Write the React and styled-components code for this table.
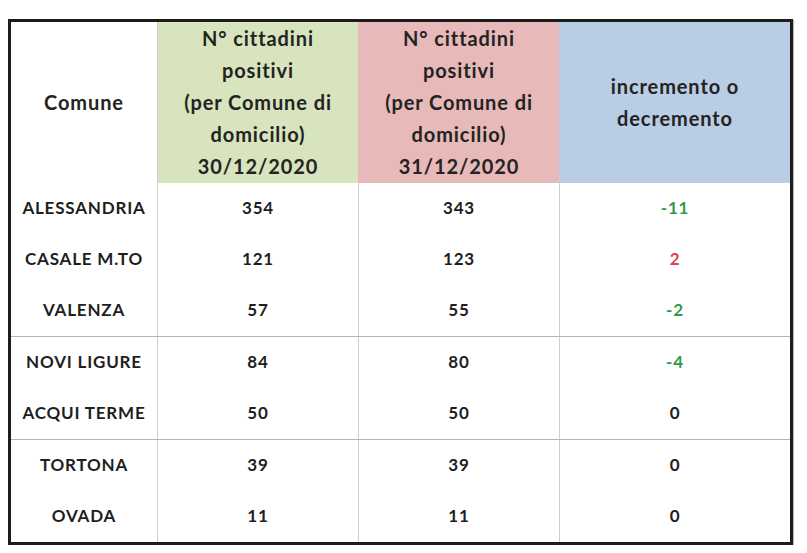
import React from 'react';
import styled, {createGlobalStyle} from 'styled-components';

const GlobalStyle = createGlobalStyle`
  html, body {
    margin: 0;
    padding: 0;
    background: #fff;
  }
  body {
    font-family: Lato, "Open Sans", "Liberation Sans", sans-serif;
    color: #222;
  }
`;

const groups = [
    [
        {name: 'ALESSANDRIA', a: 354, b: 343, diff: -11},
        {name: 'CASALE M.TO', a: 121, b: 123, diff: 2},
        {name: 'VALENZA', a: 57, b: 55, diff: -2},
    ],
    [
        {name: 'NOVI LIGURE', a: 84, b: 80, diff: -4},
        {name: 'ACQUI TERME', a: 50, b: 50, diff: 0},
    ],
    [
        {name: 'TORTONA', a: 39, b: 39, diff: 0},
        {name: 'OVADA', a: 11, b: 11, diff: 0},
    ],
];

const trend = (n) => (n < 0 ? 'down' : n > 0 ? 'up' : 'flat');

const App = () => {
    return (
        <Page>
            <GlobalStyle/>
            <Table>
                <HeadRow>
                    <HeadCell>Comune</HeadCell>
                    <HeadCell $bg={'#d8e4bd'}>
                        N° cittadini<br/>positivi<br/>(per Comune di<br/>domicilio)<br/>30/12/2020
                    </HeadCell>
                    <HeadCell $bg={'#e7b9b8'}>
                        N° cittadini<br/>positivi<br/>(per Comune di<br/>domicilio)<br/>31/12/2020
                    </HeadCell>
                    <HeadCell $bg={'#b9cde4'}>
                        incremento o<br/>decremento
                    </HeadCell>
                </HeadRow>
                {
                    groups.map((group, gi) => (
                        <Group key={gi} $first={gi === 0}>
                            {
                                group.map((row) => (
                                    <Row key={row.name}>
                                        <Cell>{row.name}</Cell>
                                        <Cell>{row.a}</Cell>
                                        <Cell>{row.b}</Cell>
                                        <Cell $trend={trend(row.diff)}>{row.diff}</Cell>
                                    </Row>
                                ))
                            }
                        </Group>
                    ))
                }
            </Table>
        </Page>
    )
}

const Page = styled.div`
  padding: 19px 0 0 8px;
`;

const Table = styled.div`
  width: 779px;
  border: 3px solid #1c1c1c;
  box-shadow: 1px 1px 1px rgba(0, 0, 0, 0.25);
  background: #fff;
`;

const columns = '146px 201px 201px 231px';

const HeadRow = styled.div`
  display: grid;
  grid-template-columns: ${columns};
  height: 160px;
`;

const HeadCell = styled.div`
  display: flex;
  align-items: center;
  justify-content: center;
  text-align: center;
  background: ${p => p.$bg || '#fff'};
  font-size: 20px;
  font-weight: 700;
  letter-spacing: 0.9px;
  line-height: 32px;
  color: #232323;
  padding-bottom: 1px;

  &:not(:first-child) {
    border-left: 1px solid ${p => p.$bg || '#c8c8c8'};
  }
  &:nth-child(2) {
    border-left-color: #cfcfcf;
  }
`;

const Group = styled.div`
  border-top: 1px solid ${p => (p.$first ? 'transparent' : '#b4b4b4')};
`;

const Row = styled.div`
  display: grid;
  grid-template-columns: ${columns};
  height: 51px;
`;

const trendColors = {
    down: '#2f9a4c',
    up: '#e2404c',
    flat: '#1e1e1e',
};

const Cell = styled.div`
  display: flex;
  align-items: center;
  justify-content: center;
  padding-bottom: 3px;
  font-size: 17px;
  font-weight: 700;
  letter-spacing: 0.8px;
  color: ${p => trendColors[p.$trend] || '#1e1e1e'};

  &:not(:first-child) {
    border-left: 1px solid #cfcfcf;
  }
`;

export default App;
